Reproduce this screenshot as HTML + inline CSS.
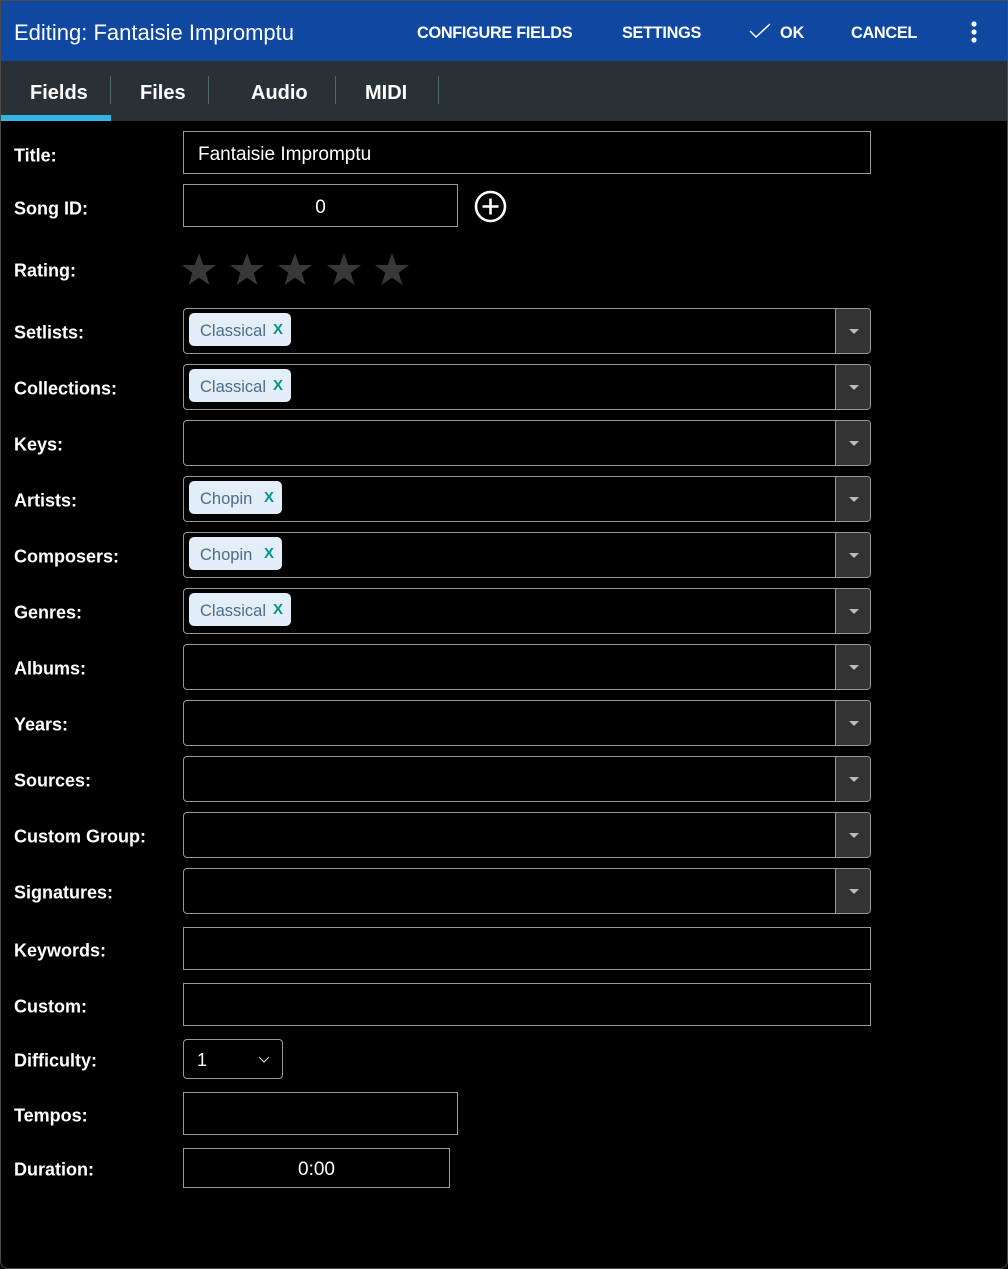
<!DOCTYPE html>
<html><head><meta charset="utf-8"><style>
*{box-sizing:border-box;margin:0;padding:0}
body{width:1008px;height:1269px;background:#000;font-family:"Liberation Sans",sans-serif;color:#fff;position:relative;overflow:hidden}
.frame{position:absolute;left:0;top:0;width:1008px;height:1269px;border:1px solid #4a4a4a;border-radius:0 0 8px 8px;pointer-events:none;z-index:5}
.hdr{position:absolute;left:0;top:0;width:1008px;height:61px;background:#0f47a1}
.tabs{position:absolute;left:0;top:61px;width:1008px;height:60px;background:#293136}
.t{position:absolute;font-size:20px;font-weight:bold;top:21px}
.sep{position:absolute;top:15px;width:1px;height:28px;background:#566}
.a{position:absolute;font-weight:bold;font-size:16.3px;top:24px}
.lbl{position:absolute;left:14px;font-size:18px;font-weight:bold;transform:translateY(-50%);margin-top:2px}
.box{position:absolute;border:1px solid #999;background:#000}
.cb{position:absolute;left:183px;width:688px;height:46px;border:1px solid #999;border-radius:4px;overflow:hidden}
.cb .dd{position:absolute;right:0;top:0;width:35px;height:100%;background:#333;border-left:1px solid #999}
.cb .dd:after{content:"";position:absolute;left:13px;top:20px;border-left:5px solid transparent;border-right:5px solid transparent;border-top:5px solid #bbb}
.chip{position:absolute;left:5px;top:4px;height:33px;background:#e3eef8;border-radius:5px;color:#4d6c8a;font-size:16.5px;padding:9px 0 0 11px}
.chip b{color:#009688;font-size:15px;position:absolute;right:8px;top:8px}
</style></head><body>
<div class="frame"></div>
<div class="hdr">
<div style="position:absolute;left:14px;top:20px;font-size:22px">Editing: Fantaisie Impromptu</div>
<div class="a" style="left:417px;letter-spacing:-0.3px">CONFIGURE FIELDS</div>
<div class="a" style="left:622px;letter-spacing:-0.3px">SETTINGS</div>
<svg style="position:absolute;left:749px;top:23px" width="22" height="16"><path d="M1 8 L7 14 L21 1" stroke="#fff" stroke-width="1.5" fill="none"/></svg>
<div class="a" style="left:780px">OK</div>
<div class="a" style="left:851px;letter-spacing:-0.3px">CANCEL</div>
<svg style="position:absolute;left:969px;top:21px" width="10" height="22"><circle cx="5" cy="3" r="2.6" fill="#fff"/><circle cx="5" cy="11" r="2.6" fill="#fff"/><circle cx="5" cy="19" r="2.6" fill="#fff"/></svg>
</div>
<div class="tabs">
<div class="t" style="left:30px">Fields</div><div class="sep" style="left:110px"></div>
<div class="t" style="left:140px">Files</div><div class="sep" style="left:208px"></div>
<div class="t" style="left:251px">Audio</div><div class="sep" style="left:335px"></div>
<div class="t" style="left:365px">MIDI</div><div class="sep" style="left:438px"></div>
<div style="position:absolute;left:1px;top:54px;width:110px;height:6px;background:#33b5e5"></div>
</div>

<div class="lbl" style="top:154px">Title:</div>
<div class="box" style="left:183px;top:131px;width:688px;height:43px"><div style="position:absolute;left:14px;top:12px;font-size:19px">Fantaisie Impromptu</div></div>
<div class="lbl" style="top:207px">Song ID:</div>
<div class="box" style="left:183px;top:184px;width:275px;height:43px"><div style="position:absolute;left:0;width:100%;text-align:center;top:12px;font-size:19px">0</div></div>
<svg style="position:absolute;left:474px;top:190px" width="34" height="34"><circle cx="16.5" cy="16.5" r="14.5" stroke="#fff" stroke-width="2.6" fill="none"/><path d="M16.5 8.5V24.5M8.5 16.5H24.5" stroke="#fff" stroke-width="2.6"/></svg>
<div class="lbl" style="top:269px">Rating:</div>
<svg style="position:absolute;left:181px;top:252px" width="230" height="36" fill="#383838">
<g id="s"><path d="M18 1 L22.2 13 L35 13 L24.7 20.8 L28.5 33 L18 25.6 L7.5 33 L11.3 20.8 L1 13 L13.8 13Z"/></g>
<use href="#s" x="48"/><use href="#s" x="96"/><use href="#s" x="145"/><use href="#s" x="193"/>
</svg>

<div class="lbl" style="top:331px">Setlists:</div>
<div class="cb" style="top:308px"><div class="chip" style="width:102px">Classical<b>X</b></div><div class="dd"></div></div>
<div class="lbl" style="top:387px">Collections:</div>
<div class="cb" style="top:364px"><div class="chip" style="width:102px">Classical<b>X</b></div><div class="dd"></div></div>
<div class="lbl" style="top:443px">Keys:</div>
<div class="cb" style="top:420px"><div class="dd"></div></div>
<div class="lbl" style="top:499px">Artists:</div>
<div class="cb" style="top:476px"><div class="chip" style="width:93px">Chopin<b>X</b></div><div class="dd"></div></div>
<div class="lbl" style="top:555px">Composers:</div>
<div class="cb" style="top:532px"><div class="chip" style="width:93px">Chopin<b>X</b></div><div class="dd"></div></div>
<div class="lbl" style="top:611px">Genres:</div>
<div class="cb" style="top:588px"><div class="chip" style="width:102px">Classical<b>X</b></div><div class="dd"></div></div>
<div class="lbl" style="top:667px">Albums:</div>
<div class="cb" style="top:644px"><div class="dd"></div></div>
<div class="lbl" style="top:723px">Years:</div>
<div class="cb" style="top:700px"><div class="dd"></div></div>
<div class="lbl" style="top:779px">Sources:</div>
<div class="cb" style="top:756px"><div class="dd"></div></div>
<div class="lbl" style="top:835px">Custom Group:</div>
<div class="cb" style="top:812px"><div class="dd"></div></div>
<div class="lbl" style="top:891px">Signatures:</div>
<div class="cb" style="top:868px"><div class="dd"></div></div>

<div class="lbl" style="top:949px">Keywords:</div>
<div class="box" style="left:183px;top:927px;width:688px;height:43px"></div>
<div class="lbl" style="top:1005px">Custom:</div>
<div class="box" style="left:183px;top:983px;width:688px;height:43px"></div>
<div class="lbl" style="top:1059px">Difficulty:</div>
<div class="box" style="left:183px;top:1039px;width:100px;height:40px;border-radius:4px"><div style="position:absolute;left:13px;top:10px;font-size:18px">1</div>
<svg style="position:absolute;left:74px;top:16px" width="12" height="8"><path d="M1 1L6 6L11 1" stroke="#ccc" stroke-width="1.2" fill="none"/></svg></div>
<div class="lbl" style="top:1114px">Tempos:</div>
<div class="box" style="left:183px;top:1092px;width:275px;height:43px"></div>
<div class="lbl" style="top:1168px">Duration:</div>
<div class="box" style="left:183px;top:1148px;width:267px;height:40px"><div style="position:absolute;left:0;width:100%;text-align:center;top:10px;font-size:19px">0:00</div></div>
</body></html>
